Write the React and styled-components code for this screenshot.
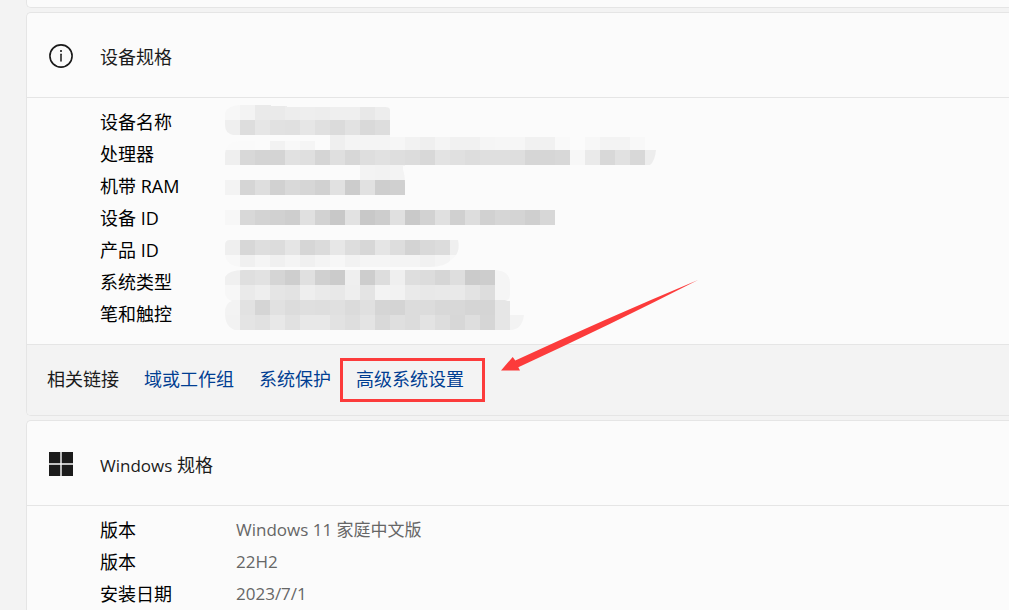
import styled, { createGlobalStyle } from "styled-components";

const GlobalStyle = createGlobalStyle`
  body {
    margin: 0;
    background: #f3f3f3;
    color: #000;
    font-family: "Open Sans", "Noto Sans CJK SC", sans-serif;
    font-size: 18px;
    line-height: 32px;
  }
`;

const CELL = 15;

// one string per mosaic row, two hex digits per cell, ".." is an empty cell
const mosaicRows = [
  "f7f3eaeaedeeedefefe8ed",
  "efdde6e1e0e6e0dbe2d9dd",
  "fafafbf2f8f5..eff4f4f4f6f2eff4f1f1f5f6f6f1f1f9..f7f3f3f8",
  "efd8d4d4e1dfd5dfd7dee1dedcd8e3e0dddfdfded6d6d8f7ead8e1d8ed",
  "..................f3f2f3",
  "f3d5ded1d9d6d1e1cce1ced0",
  "",
  "f7d8d3d1cee0d2c8e2c8cde0c9d2e0d0ddd1d6d4cfd7",
  "",
  "efd7dedce5d6dbe7ddd7e5ddd3d9dcef",
  "f8f0f5f0f4f0f4f7f2f5f5f4f4f1f4f8",
  "f0dfe2d5cee0d0cbefcdddefdedcd6decbcdf5",
  "f7eaeee5e3eeeae8eee4f3f2eae8e9e9e3ddf5",
  "f3e2d5e1dcdfdee0dbe0d5d4dcdcd8d8d5d5e6",
  "f2e4e1e8e1e8e8e2dee4d9dfdce3ddd7ded6e6f3",
];

const deviceLabels = [
  "设备名称",
  "处理器",
  "机带 RAM",
  "设备 ID",
  "产品 ID",
  "系统类型",
  "笔和触控",
];

const windowsSpecs = [
  ["版本", "Windows 11 家庭中文版"],
  ["版本", "22H2"],
  ["安装日期", "2023/7/1"],
];

const Mosaic = () => (
  <MosaicSvg width="435" height="225" viewBox="0 0 435 225" shapeRendering="crispEdges" aria-hidden="true">
    <defs>
      <clipPath id="brush">
        <path d="M0 8Q3 0 16 0H46V1H62V2H160Q165 2 165 5V32H420V45H431Q430 56 425 60H345V61H178V65Q180 70 180 79V90H345V135H233Q236 148 226 155Q220 162 205 162H18Q2 162 0 150V140Q0 135 5 135H0V60H0V48Q2 36 15 36H105V30H8Q0 28 0 20Z" />
        <path d="M0 172Q4 165 18 165H270Q285 166 285 178V190Q285 195 280 196H285V210H299Q297 225 285 225H10Q0 222 0 208Q0 198 7 196Q0 193 0 188Z" />
      </clipPath>
    </defs>
    <g clipPath="url(#brush)">
      {mosaicRows.map((row, y) =>
        (row.match(/../g) || []).map((c, x) =>
          c === ".." ? null : (
            <rect
              key={`${x}-${y}`}
              x={x * CELL}
              y={y * CELL}
              width={CELL}
              height={CELL}
              fill={`#${c}${c}${c}`}
            />
          )
        )
      )}
    </g>
  </MosaicSvg>
);

const InfoIcon = () => (
  <Icon viewBox="0 0 24 24" aria-hidden="true">
    <circle cx="12" cy="12" r="11.1" fill="none" stroke="#1b1b1b" strokeWidth="1.6" />
    <circle cx="12" cy="7" r="1.1" fill="#1b1b1b" />
    <path d="M12 10.2V17" fill="none" stroke="#1b1b1b" strokeWidth="1.5" strokeLinecap="round" />
  </Icon>
);

const WindowsIcon = () => (
  <Icon viewBox="0 0 24 24" aria-hidden="true">
    <path d="M0 0H11.3V11.3H0ZM12.7 0H24V11.3H12.7ZM0 12.7H11.3V24H0ZM12.7 12.7H24V24H12.7Z" fill="#1b1b1b" />
  </Icon>
);

const App = () => {
  return (
    <>
      <GlobalStyle />
      <Page>
        <PreviousCard />
        <Card>
          <CardHeader>
            <InfoIcon />
            <Title>设备规格</Title>
          </CardHeader>
          <CardBody>
            <LabelList>
              {deviceLabels.map((label) => (
                <li key={label}>{label}</li>
              ))}
            </LabelList>
            <Mosaic />
          </CardBody>
          <LinkBar>
            <LinkTitle>相关链接</LinkTitle>
            <StyledLink href="#domain">域或工作组</StyledLink>
            <StyledLink href="#protection">系统保护</StyledLink>
            <StyledLink href="#advanced">
              高级系统设置
              <Highlight />
              <Arrow viewBox="0 0 200 94" aria-hidden="true">
                <path d="M1 91.5L12.7 78L15.3 81.5Q105 40 198 1Q110 46 18.3 88.2L20 91.5Z" fill="#fc3b3b" />
              </Arrow>
            </StyledLink>
          </LinkBar>
        </Card>
        <Card>
          <CardHeader>
            <WindowsIcon />
            <Title>
              <Latin>Windows</Latin> 规格
            </Title>
          </CardHeader>
          <CardBody>
            <SpecTable>
              <tbody>
                {windowsSpecs.map(([label, value]) => (
                  <tr key={value}>
                    <SpecLabel scope="row">{label}</SpecLabel>
                    <SpecValue>{value}</SpecValue>
                  </tr>
                ))}
              </tbody>
            </SpecTable>
          </CardBody>
        </Card>
      </Page>
    </>
  );
};
export default App;

/*Styled Components*/

const Page = styled.main`
  display: flex;
  flex-direction: column;
  gap: 4px;
  height: 100vh;
  padding-left: 26px;
  overflow: hidden;
`;

const Card = styled.section`
  flex-shrink: 0;
  background: #fbfbfb;
  border: 1px solid #e5e5e5;
  border-right: none;
  border-radius: 5px 0 0 5px;
  overflow: hidden;
`;

const PreviousCard = styled(Card)`
  height: 7px;
  border-top: none;
  border-top-left-radius: 0;
`;

const CardHeader = styled.header`
  display: flex;
  align-items: center;
  gap: 27px;
  height: 82px;
  padding: 2px 0 0 22px;
  border-bottom: 1px solid #e5e5e5;
`;

const Icon = styled.svg`
  width: 24px;
  height: 24px;
`;

const Title = styled.h2`
  margin: 0;
  padding-top: 2px;
  color: #1b1b1b;
  font-size: 18px;
  font-weight: 400;
`;

const Latin = styled.span`
  font-size: 17px;
`;

const CardBody = styled.div`
  display: flex;
  padding: 8px 0 14px 73px;
`;

const LabelList = styled.ul`
  width: 125px;
  margin: 0;
  padding: 0;
  list-style: none;
`;

const MosaicSvg = styled.svg`
  margin-top: -1px;
`;

const LinkBar = styled.nav`
  display: flex;
  align-items: center;
  gap: 25px;
  height: 68px;
  padding: 0 0 2px 20px;
  background: #f3f3f3;
  border-top: 1px solid #e5e5e5;
`;

const LinkTitle = styled.span`
  color: #1b1b1b;
`;

const StyledLink = styled.a`
  position: relative;
  color: #003e92;
  text-decoration: none;
`;

const Highlight = styled.span`
  position: absolute;
  inset: -5px -21px -7px -16px;
  border: 3px solid #fc3b3b;
`;

const Arrow = styled.svg`
  position: absolute;
  left: 144px;
  bottom: 22px;
  width: 200px;
  height: 94px;
`;

const SpecTable = styled.table`
  border-collapse: collapse;
`;

const SpecLabel = styled.th`
  width: 136px;
  padding: 0;
  font-weight: 400;
  text-align: left;
`;

const SpecValue = styled.td`
  padding: 0;
  color: #666;
  font-size: 17px;
`;
